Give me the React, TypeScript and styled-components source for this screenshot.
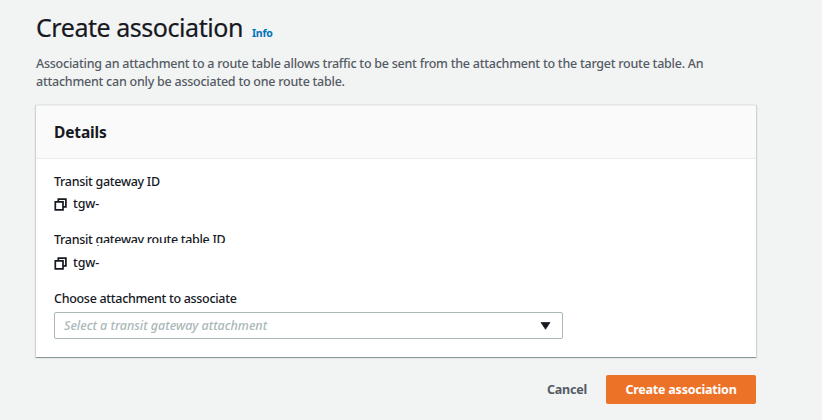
import React from "react";
import styled, { createGlobalStyle } from "styled-components";

const Global = createGlobalStyle`
  * { box-sizing: border-box; }
  body {
    margin: 0;
    background: #f2f3f3;
    color: #16191f;
    font-family: "Noto Sans", "Open Sans", sans-serif;
    font-size: 12.5px;
    font-weight: 500;
    line-height: 18px;
    white-space: nowrap;
  }
  h1, h2, p { margin: 0; }
`;

const Page = styled.main`
  width: 822px;
  height: 420px;
  padding: 8px 66px 0 36px;
  overflow: hidden;
`;

const TitleRow = styled.header`
  display: flex;
  align-items: baseline;
  gap: 9px;
  height: 47px;
`;

const Title = styled.h1`
  font-size: 25px;
  font-weight: 400;
  line-height: 38px;
  letter-spacing: -0.45px;
  -webkit-text-stroke: 0.2px currentColor;
`;

const InfoLink = styled.a`
  color: #0073bb;
  font-size: 10.5px;
  font-weight: 700;
  letter-spacing: -0.2px;
`;

const Description = styled.p`
  height: 50px;
  color: #545b64;
  letter-spacing: -0.24px;
`;

const Panel = styled.section`
  height: 253px;
  background: #fff;
  box-shadow: 1px 0 1px 0 rgba(0, 28, 36, 0.15), -1px 0 1px 0 rgba(0, 28, 36, 0.15);
  border-bottom: 1px solid #87999a;
`;

const PanelHeader = styled.div`
  display: flex;
  align-items: center;
  height: 54px;
  padding: 0 0 1px 18px;
  background: #fafafa;
  border-top: 1px solid #eaeded;
  border-bottom: 1px solid #eaeded;
`;

const PanelTitle = styled.h2`
  font-size: 15.5px;
  font-weight: 700;
  letter-spacing: -0.15px;
`;

const PanelBody = styled.div`
  padding: 14px 18px 0;
`;

const Field = styled.div<{ $height: number }>`
  height: ${(p) => p.$height}px;
`;

const Label = styled.div`
  position: relative;
  letter-spacing: -0.3px;
`;

const Redaction = styled.span`
  position: absolute;
  left: 41px;
  top: 12px;
  width: 150px;
  height: 7px;
  background: #fff;
`;

const Descender = styled.span`
  position: absolute;
  left: 43px;
  top: 14px;
  width: 2px;
  height: 1px;
  background: #85898e;
`;

const Value = styled.div<{ $gap?: number }>`
  display: flex;
  align-items: center;
  gap: 6px;
  margin-top: ${(p) => p.$gap ?? 4}px;
  letter-spacing: -0.1px;
`;

const SelectBox = styled.div`
  display: flex;
  align-items: center;
  justify-content: space-between;
  width: 509px;
  height: 27px;
  margin-top: 4px;
  padding: 0 11px 0 9px;
  border: 1px solid #aab7b8;
  border-radius: 2px;
`;

const Placeholder = styled.span`
  color: #aab7b8;
  font-style: italic;
  letter-spacing: -0.01px;
`;

const Actions = styled.footer`
  display: flex;
  justify-content: flex-end;
  margin-top: 17px;
`;

const Button = styled.button<{ $primary?: boolean }>`
  width: ${(p) => (p.$primary ? 150 : 78)}px;
  height: 29px;
  padding: 0;
  border: 0;
  border-radius: 2px;
  background: ${(p) => (p.$primary ? "#ec7228" : "transparent")};
  color: ${(p) => (p.$primary ? "#fff" : "#545b64")};
  font: 700 12.5px/18px "Noto Sans", sans-serif;
  letter-spacing: -0.22px;
`;

const CopyIcon = () => (
  <svg width="13" height="13" viewBox="0 0 13 13" fill="none" stroke="#16191f" strokeWidth="1.7">
    <path d="M4.3 3.8V1.1h7.6V8.9H9.2" />
    <path d="M1.3 3.9h7.7v7.9H1.3z" />
  </svg>
);

const Caret = () => (
  <svg width="11" height="8" viewBox="0 0 11 8">
    <path d="M1 .5h9L5.5 7.3z" fill="#16191f" stroke="#16191f" strokeWidth=".7" strokeLinejoin="round" />
  </svg>
);

export default function App() {
  return (
    <>
      <Global />
      <Page>
        <TitleRow>
          <Title>Create association</Title>
          <InfoLink>Info</InfoLink>
        </TitleRow>
        <Description>
          Associating an attachment to a route table allows traffic to be sent from the attachment to the target route table. An
          <br />
          attachment can only be associated to one route table.
        </Description>
        <Panel>
          <PanelHeader>
            <PanelTitle>Details</PanelTitle>
          </PanelHeader>
          <PanelBody>
            <Field $height={58}>
              <Label>Transit gateway ID</Label>
              <Value><CopyIcon />tgw-</Value>
            </Field>
            <Field $height={59}>
              <Label>
                Transit gateway route table ID
                <Redaction />
                <Descender />
              </Label>
              <Value $gap={5}><CopyIcon />tgw-</Value>
            </Field>
            <Label>Choose attachment to associate</Label>
            <SelectBox>
              <Placeholder>Select a transit gateway attachment</Placeholder>
              <Caret />
            </SelectBox>
          </PanelBody>
        </Panel>
        <Actions>
          <Button>Cancel</Button>
          <Button $primary>Create association</Button>
        </Actions>
      </Page>
    </>
  );
}
